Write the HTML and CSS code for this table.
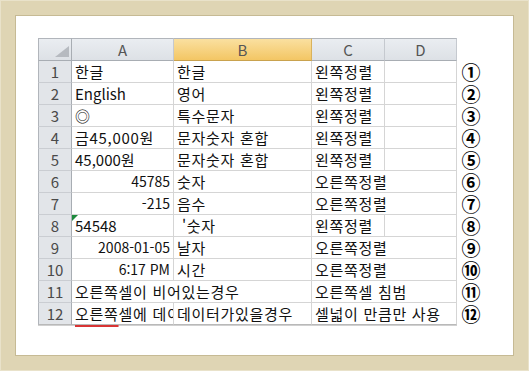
FILE: index.html
```html
<!DOCTYPE html>
<html lang="ko">
<head>
<meta charset="utf-8">
<title>Excel 셀 정렬</title>
<link rel="stylesheet" href="styles.css">
</head>
<body>
<div class="frame">
  <div class="canvas">
    <div class="sheet">
      <div class="hd corner"><svg width="14" height="11" viewBox="0 0 14 11"><polygon points="14,0 14,11 0,11" fill="#b6bac0"/></svg></div>
      <div class="hd">A</div>
      <div class="hd sel">B</div>
      <div class="hd">C</div>
      <div class="hd">D</div>
      <div class="blank"></div>

      <div class="rh">1</div><div class="c">한글</div><div class="c">한글</div><div class="c">왼쪽정렬</div><div class="c"></div><div class="mark">①</div>
      <div class="rh">2</div><div class="c lat">English</div><div class="c">영어</div><div class="c">왼쪽정렬</div><div class="c"></div><div class="mark">②</div>
      <div class="rh">3</div><div class="c">◎</div><div class="c">특수문자</div><div class="c">왼쪽정렬</div><div class="c"></div><div class="mark">③</div>
      <div class="rh">4</div><div class="c">금45,000원</div><div class="c">문자숫자 혼합</div><div class="c">왼쪽정렬</div><div class="c"></div><div class="mark">④</div>
      <div class="rh">5</div><div class="c lat">45,000원</div><div class="c">문자숫자 혼합</div><div class="c">왼쪽정렬</div><div class="c"></div><div class="mark">⑤</div>
      <div class="rh">6</div><div class="c num">45785</div><div class="c">숫자</div><div class="c s2">오른쪽정렬</div><div class="mark">⑥</div>
      <div class="rh">7</div><div class="c num">-215</div><div class="c">음수</div><div class="c s2">오른쪽정렬</div><div class="mark">⑦</div>
      <div class="rh">8</div><div class="c lat flag">54548</div><div class="c pre"> '숫자</div><div class="c">왼쪽정렬</div><div class="c"></div><div class="mark">⑧</div>
      <div class="rh">9</div><div class="c num">2008-01-05</div><div class="c">날자</div><div class="c s2">오른쪽정렬</div><div class="mark">⑨</div>
      <div class="rh">10</div><div class="c num">6:17 PM</div><div class="c">시간</div><div class="c s2">오른쪽정렬</div><div class="mark">⑩</div>
      <div class="rh">11</div><div class="c s2">오른쪽셀이 비어있는경우</div><div class="c s2">오른쪽셀 침범</div><div class="mark">⑪</div>
      <div class="rh last">12</div><div class="c last"><span class="sp">오른쪽</span>셀에 데이터가있을경우</div><div class="c last">데이터가있을경우</div><div class="c s2 last">셀넓이 만큼만 사용</div><div class="mark">⑫</div>
    </div>
  </div>
</div>
</body>
</html>
```

FILE: styles.css
```css
html, body {
  margin: 0;
  padding: 0;
  background: #fff;
}

.frame {
  width: 529px;
  height: 371px;
  box-sizing: border-box;
  padding: 15px;
  background: #dfd5b4;
  box-shadow: inset 0 0 0 1px #e9e2ca;
}

.canvas {
  height: 100%;
  box-sizing: border-box;
  background: #fff;
  border: 1px solid #c6ba94;
  padding: 22px 0 0 22px;
}

.sheet {
  display: grid;
  grid-template-columns: 34px 102px 138px 73px 72px 28px;
  grid-template-rows: 23px repeat(12, 22px);
  width: max-content;
  font-family: "Noto Sans CJK KR", "Noto Sans", sans-serif;
  font-size: 15px;
  color: #111;
}

.hd {
  background: linear-gradient(#eaedf1, #dde1e6);
  border-top: 1px solid #b1b5bb;
  border-right: 1px solid #c5c9cf;
  border-bottom: 1px solid #a8adb3;
  text-align: center;
  color: #555;
  line-height: 21px;
}

.hd.sel {
  background: linear-gradient(#fae0a0, #f3c664);
  border-right-color: #d9b25c;
  border-bottom-color: #c9a24e;
}

.corner {
  border-left: 1px solid #b1b5bb;
  border-right-color: #a8adb3;
  display: flex;
  align-items: flex-end;
  justify-content: flex-end;
  padding: 0 2px 3px 0;
}

.rh {
  background: #e2e5e9;
  border-left: 1px solid #b1b5bb;
  border-right: 1px solid #a8adb3;
  border-bottom: 1px solid #cacdd2;
  text-align: center;
  color: #4a4a4a;
  line-height: 21px;
}

.c {
  border-right: 1px solid #d5d5d5;
  border-bottom: 1px solid #d5d5d5;
  padding: 0 3px;
  white-space: nowrap;
  overflow-x: clip;
  overflow-y: visible;
  line-height: 21px;
  min-width: 0;
  letter-spacing: 0.7px;
}

.lat {
  letter-spacing: 0;
}

.num {
  text-align: right;
  letter-spacing: 0;
  font-size: 14px;
}

.s2 {
  grid-column: span 2;
}

.pre {
  white-space: pre;
}

.flag {
  position: relative;
}

.flag::before {
  content: "";
  position: absolute;
  left: 0;
  top: 0;
  border-top: 6px solid #1d8a3c;
  border-right: 6px solid transparent;
}

.last {
  border-bottom-color: #b9b9b9;
  box-shadow: 0 1px 0 #d0d0d0;
}

.sp {
  text-decoration: underline 2px #d83434;
  text-underline-offset: 5px;
}

.mark {
  font-weight: 700;
  font-size: 19px;
  line-height: 22px;
  text-align: center;
  color: #000;
}
```
